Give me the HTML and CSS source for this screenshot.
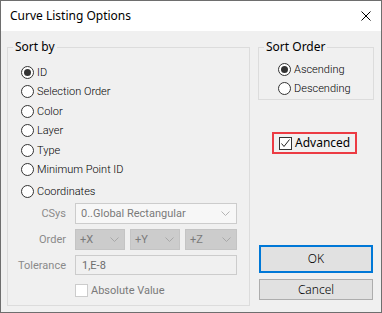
FILE: index.html
```html
<!DOCTYPE html>
<html lang="en">
<head>
    <meta charset="UTF-8">
    <title>Curve Listing Options</title>
    <link rel="stylesheet" href="styles.css">
</head>
<body>
    <div class="window">
        <div class="titlebar">
            <span class="title">Curve Listing Options</span>
            <svg class="close" width="10" height="10" viewBox="0 0 10 10">
                <path d="M0.5 0.5 L9.5 9.5 M9.5 0.5 L0.5 9.5" stroke="#000" stroke-width="1" fill="none"/>
            </svg>
        </div>

        <div class="content">
            <fieldset class="group sort-by">
                <legend>Sort by</legend>
                <div class="options">
                    <div class="radio"><span class="circle checked"></span>ID</div>
                    <div class="radio"><span class="circle"></span>Selection Order</div>
                    <div class="radio"><span class="circle"></span>Color</div>
                    <div class="radio"><span class="circle"></span>Layer</div>
                    <div class="radio"><span class="circle"></span>Type</div>
                    <div class="radio"><span class="circle"></span>Minimum Point ID</div>
                    <div class="radio coords"><span class="circle"></span>Coordinates</div>
                </div>

                <div class="fields">
                    <span class="field-label">CSys</span>
                    <div class="combo csys">
                        <span>0..Global Rectangular</span>
                        <svg width="9" height="5" viewBox="0 0 9 5"><path d="M0.5 0.5 L4.5 4.5 L8.5 0.5" stroke="#b4b4b4" fill="none"/></svg>
                    </div>

                    <span class="field-label">Order</span>
                    <div class="combo-row">
                        <div class="combo off">
                            <span>+X</span>
                            <svg width="9" height="5" viewBox="0 0 9 5"><path d="M0.5 0.5 L4.5 4.5 L8.5 0.5" stroke="#a8a8a8" fill="none"/></svg>
                        </div>
                        <div class="combo off">
                            <span>+Y</span>
                            <svg width="9" height="5" viewBox="0 0 9 5"><path d="M0.5 0.5 L4.5 4.5 L8.5 0.5" stroke="#a8a8a8" fill="none"/></svg>
                        </div>
                        <div class="combo off">
                            <span>+Z</span>
                            <svg width="9" height="5" viewBox="0 0 9 5"><path d="M0.5 0.5 L4.5 4.5 L8.5 0.5" stroke="#a8a8a8" fill="none"/></svg>
                        </div>
                    </div>

                    <span class="field-label">Tolerance</span>
                    <div class="textbox">1,E-8</div>

                    <span></span>
                    <div class="check disabled"><span class="box"></span>Absolute Value</div>
                </div>
            </fieldset>

            <div class="side">
                <fieldset class="group sort-order">
                    <legend>Sort Order</legend>
                    <div class="order-options">
                        <div class="radio"><span class="circle checked"></span>Ascending</div>
                        <div class="radio"><span class="circle"></span>Descending</div>
                    </div>
                </fieldset>

                <div class="advanced">
                    <div class="check">
                        <span class="box">
                            <svg width="11" height="11" viewBox="0 0 11 11"><path d="M1.5 5.5 L4 8.5 L9.5 1.5" stroke="#222" stroke-width="1" fill="none"/></svg>
                        </span>Advanced
                    </div>
                </div>

                <div class="buttons">
                    <button class="btn default">OK</button>
                    <button class="btn">Cancel</button>
                </div>
            </div>
        </div>
    </div>
</body>
</html>
```

FILE: styles.css
```css
body {
    margin: 0;
    font-family: Roboto, "Noto Sans", sans-serif;
    font-size: 11px;
    line-height: 13px;
    color: #000;
}

.window {
    width: 382px;
    height: 313px;
    box-sizing: border-box;
    border: 1px solid #6e6e6e;
    display: flex;
    flex-direction: column;
}

.titlebar {
    height: 30px;
    background-color: #fff;
    display: flex;
    align-items: center;
    justify-content: space-between;
    padding: 0 10px 0 9px;
    flex-shrink: 0;
}

.title {
    font-family: "Noto Sans", sans-serif;
    font-size: 12px;
    line-height: 16px;
}

.content {
    flex: 1;
    background-color: #f0f0f0;
    display: flex;
    gap: 8px;
    padding: 9px 7px 6px 6px;
}

.group {
    margin: 0;
    border: 1px solid #dcdcdc;
    min-width: 0;
    box-sizing: border-box;
}

.group legend {
    padding: 0 2px;
    margin-left: 5px;
    line-height: 14px;
    font-family: "Noto Sans", sans-serif;
    font-size: 12px;
}

.sort-by {
    width: 243px;
    padding: 8px 0 8px 0;
}

.options {
    padding-left: 13px;
}

.radio {
    display: flex;
    align-items: center;
    height: 20px;
    gap: 3px;
    font-weight: 300;
}

.options .radio:nth-child(even) {
    height: 19px;
}

.radio.coords {
    margin-top: 2px;
}

.circle {
    width: 13px;
    height: 13px;
    box-sizing: border-box;
    border: 1px solid #333;
    border-radius: 50%;
    background-color: #fff;
    display: flex;
    align-items: center;
    justify-content: center;
}

.circle.checked::after {
    content: "";
    width: 7px;
    height: 7px;
    border-radius: 50%;
    background-color: #333;
}

.fields {
    display: grid;
    grid-template-columns: 58px 162px;
    column-gap: 9px;
    row-gap: 5px;
    margin-top: 2px;
    align-items: center;
}

.field-label {
    text-align: right;
    color: #8a8a8a;
}

.combo {
    height: 21px;
    box-sizing: border-box;
    display: flex;
    align-items: center;
    justify-content: space-between;
    color: #7a7a7a;
}

.combo.csys {
    background-color: #f7f7f7;
    border: 1px solid #cccccc;
    padding: 0 6px 0 5px;
}

.combo-row {
    display: flex;
    gap: 5px;
}

.combo.off {
    width: 50px;
    flex-shrink: 0;
    background-color: #cccccc;
    border: 1px solid #c4c4c4;
    padding: 0 5px 0 4px;
}

.combo-row .combo.off:last-child {
    width: 52px;
}

.textbox {
    height: 20px;
    box-sizing: border-box;
    border: 1px solid #cccccc;
    background-color: #f0f0f0;
    padding-left: 6px;
    display: flex;
    align-items: center;
    color: #6d6d6d;
}

.check {
    display: flex;
    align-items: center;
    gap: 3px;
    height: 13px;
}

.check.disabled {
    color: #7a7a7a;
    margin-top: 4px;
}

.box {
    width: 13px;
    height: 13px;
    box-sizing: border-box;
    border: 1px solid #333;
    background-color: #fff;
    display: flex;
    align-items: center;
    justify-content: center;
}

.check.disabled .box {
    border-color: #cccccc;
}

.side {
    width: 116px;
    display: flex;
    flex-direction: column;
}

.sort-order {
    height: 60px;
    padding: 5px 0 0 0;
}

.order-options {
    padding-left: 19px;
}

.order-options .radio:last-child {
    height: 19px;
}

.advanced {
    margin: 32px 0 0 14px;
    width: 85px;
    height: 22px;
    box-sizing: border-box;
    border: 2px solid #ec3b43;
    padding-left: 5px;
    display: flex;
    align-items: center;
}

.advanced .check {
    font-family: "Noto Sans", sans-serif;
    font-size: 12px;
    line-height: 16px;
}

.buttons {
    margin-top: auto;
    display: flex;
    flex-direction: column;
    gap: 6px;
    padding: 0 1px 6px 1px;
}

.btn {
    font-family: "Noto Sans", sans-serif;
    font-size: 12px;
    font-weight: 300;
    line-height: 16px;
    color: #000;
    background-color: #e1e1e1;
    border: 1px solid #adadad;
    height: 21px;
    margin: 0;
    padding: 0;
}

.btn.default {
    height: 28px;
    border: 2px solid #0078d7;
}
```
